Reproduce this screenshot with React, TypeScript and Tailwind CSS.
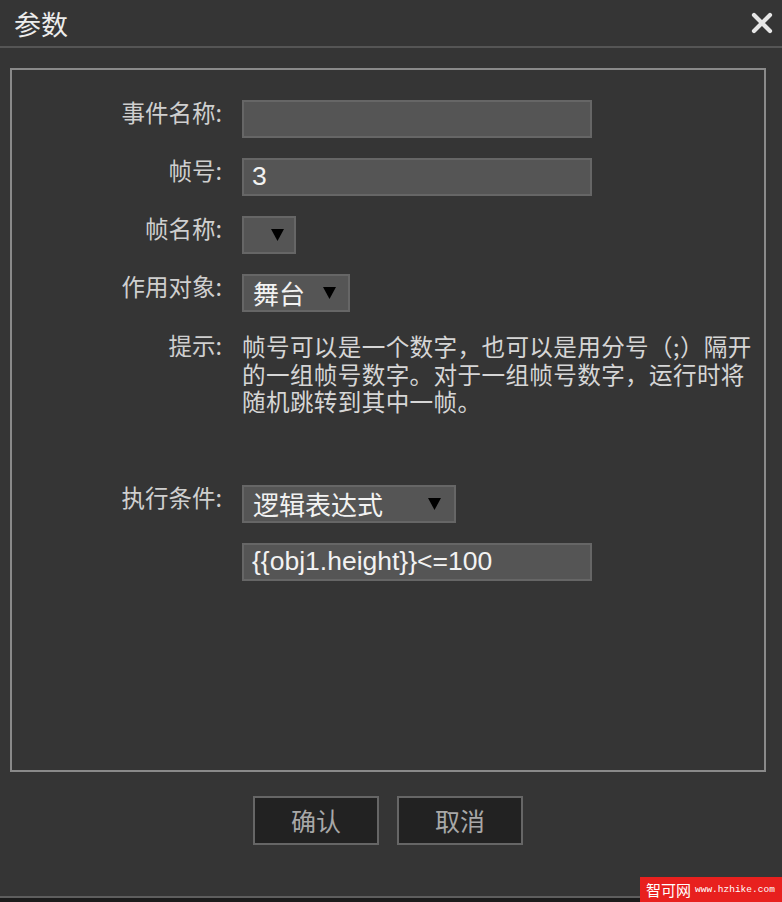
import React from "react";

const CJK = "font-['Noto_Sans_CJK_SC',sans-serif]";
const FIELD = "font-['Liberation_Sans','Noto_Sans_CJK_SC',sans-serif]";

const Arrow = () => (
  <svg width="13" height="12" viewBox="0 0 13 12" className="shrink-0">
    <polygon points="0,0 13,0 6.5,12" fill="#000" />
  </svg>
);

const Label = ({ children }: { children: React.ReactNode }) => (
  <div className={`text-right text-[23.5px] leading-[24px] text-[#cfcfcf] ${CJK}`}>{children}</div>
);

const TextBox = ({ value }: { value?: string }) => (
  <div
    className={`w-[350px] h-[38px] border-2 border-[#666] bg-[#555] flex items-center pl-[8px] text-[26.5px] text-[#f2f2f2] ${FIELD}`}
  >
    {value}
  </div>
);

const Select = ({ value, width, arrowGap }: { value?: string; width: string; arrowGap: string }) => (
  <div
    className={`${width} h-[38px] border-2 border-[#666] bg-[#555] flex items-center pl-[9px] text-[26px] text-[#f2f2f2] ${CJK}`}
  >
    <span className="leading-none">{value}</span>
    <span className={arrowGap}>
      <Arrow />
    </span>
  </div>
);

export default function App() {
  return (
    <div className="relative w-[782px] h-[902px] overflow-hidden bg-[#353535] flex flex-col">
      {/* title bar */}
      <div className="h-[48px] shrink-0 border-b-2 border-[#555] flex items-center justify-between pl-[14px] pr-[9px]">
        <span className={`text-[27px] leading-none text-[#ececec] ${CJK}`}>参数</span>
        <svg width="22" height="22" viewBox="0 0 22 22">
          <path d="M3 3 L19 19 M19 3 L3 19" stroke="#e6e6e6" strokeWidth="4.2" strokeLinecap="round" />
        </svg>
      </div>

      {/* form panel */}
      <div className="mt-[20px] ml-[10px] w-[756px] h-[704px] shrink-0 border-2 border-[#8a8a8a] pt-[30px]">
        <div className="grid grid-cols-[210px_1fr] gap-x-[20px]">
          <Label>事件名称:</Label>
          <TextBox />

          <div className="col-span-2 h-[20px]" />
          <Label>帧号:</Label>
          <TextBox value="3" />

          <div className="col-span-2 h-[20px]" />
          <Label>帧名称:</Label>
          <Select width="w-[54px]" arrowGap="ml-[18px]" />

          <div className="col-span-2 h-[20px]" />
          <Label>作用对象:</Label>
          <Select value="舞台" width="w-[108px]" arrowGap="ml-[18px]" />

          <div className="col-span-2 h-[21px]" />
          <Label>提示:</Label>
          <div className={`text-[23.6px] leading-[27.5px] tracking-[0.35px] text-[#d6d6d6] whitespace-nowrap ${CJK}`}>
            <div>帧号可以是一个数字，也可以是用分号（;）隔开</div>
            <div>的一组帧号数字。对于一组帧号数字，运行时将</div>
            <div>随机跳转到其中一帧。</div>
          </div>

          <div className="col-span-2 h-[69px]" />
          <Label>执行条件:</Label>
          <Select value="逻辑表达式" width="w-[214px]" arrowGap="ml-[45px]" />

          <div className="col-span-2 h-[20px]" />
          <div />
          <TextBox value="{{obj1.height}}<=100" />
        </div>
      </div>

      {/* buttons */}
      <div className="mt-[24px] pl-[253px] flex gap-[18px]">
        {["确认", "取消"].map((t) => (
          <button
            key={t}
            className={`w-[126px] h-[49px] border-2 border-[#666] bg-[#222] text-[25px] text-[#a8a8a8] ${CJK}`}
          >
            {t}
          </button>
        ))}
      </div>

      {/* page below the dialog */}
      <div className="mt-[51px] h-[2px] bg-[#5e5e5e] shrink-0" />
      <div className="flex-1 bg-[#1c1c1c]" />

      {/* watermark */}
      <div className="absolute right-0 bottom-0 w-[142px] h-[25px] bg-[#e8201e] flex items-center pl-[6px] gap-[4px] text-white whitespace-nowrap">
        <span className={`text-[15px] leading-none ${CJK}`}>智可网</span>
        <span className="text-[9.5px] leading-none font-['Liberation_Mono',monospace]">www.hzhike.com</span>
      </div>
    </div>
  );
}
